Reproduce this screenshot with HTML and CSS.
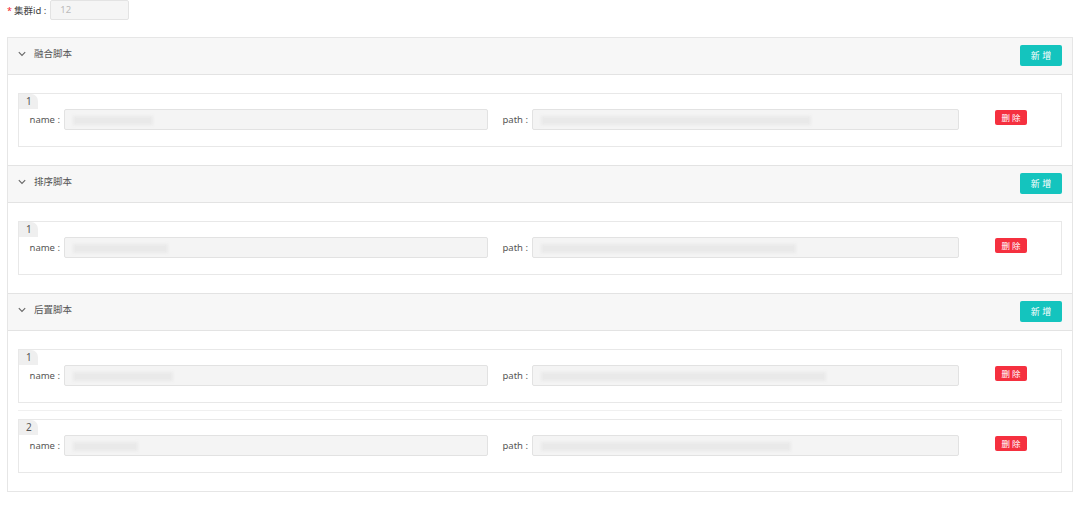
FILE: index.html
```html
<!DOCTYPE html>
<html lang="zh">
<head>
<meta charset="utf-8">
<link rel="stylesheet" href="styles.css">
</head>
<body>
<div class="top-row">
  <span class="req">*</span><span class="top-label">集群id :</span>
  <div class="id-input">12</div>
</div>
<div class="panel">
  <div class="section">
    <div class="sec-head">
      <svg class="chev" width="8" height="6" viewBox="0 0 8 6"><path d="M0.8 1.2 L4 4.4 L7.2 1.2" fill="none" stroke="#666" stroke-width="1.1"/></svg>
      <span class="sec-title">融合脚本</span>
      <button class="btn-add">新 增</button>
    </div>
    <div class="sec-body">
      <div class="card">
        <div class="tag">1</div>
        <div class="row">
          <span class="lbl lbl-name">name :</span>
          <div class="inp inp-name"><span class="blur" style="width:80px"></span></div>
          <span class="lbl lbl-path">path :</span>
          <div class="inp inp-path"><span class="blur" style="width:270px"></span></div>
          <button class="btn-del">删 除</button>
        </div>
      </div>
    </div>
  </div>
  <div class="section">
    <div class="sec-head">
      <svg class="chev" width="8" height="6" viewBox="0 0 8 6"><path d="M0.8 1.2 L4 4.4 L7.2 1.2" fill="none" stroke="#666" stroke-width="1.1"/></svg>
      <span class="sec-title">排序脚本</span>
      <button class="btn-add">新 增</button>
    </div>
    <div class="sec-body">
      <div class="card">
        <div class="tag">1</div>
        <div class="row">
          <span class="lbl lbl-name">name :</span>
          <div class="inp inp-name"><span class="blur" style="width:95px"></span></div>
          <span class="lbl lbl-path">path :</span>
          <div class="inp inp-path"><span class="blur" style="width:255px"></span></div>
          <button class="btn-del">删 除</button>
        </div>
      </div>
    </div>
  </div>
  <div class="section">
    <div class="sec-head">
      <svg class="chev" width="8" height="6" viewBox="0 0 8 6"><path d="M0.8 1.2 L4 4.4 L7.2 1.2" fill="none" stroke="#666" stroke-width="1.1"/></svg>
      <span class="sec-title">后置脚本</span>
      <button class="btn-add">新 增</button>
    </div>
    <div class="sec-body">
      <div class="card">
        <div class="tag">1</div>
        <div class="row">
          <span class="lbl lbl-name">name :</span>
          <div class="inp inp-name"><span class="blur" style="width:100px"></span></div>
          <span class="lbl lbl-path">path :</span>
          <div class="inp inp-path"><span class="blur" style="width:285px"></span></div>
          <button class="btn-del">删 除</button>
        </div>
      </div>
      <div class="sep"></div>
      <div class="card">
        <div class="tag">2</div>
        <div class="row">
          <span class="lbl lbl-name">name :</span>
          <div class="inp inp-name"><span class="blur" style="width:65px"></span></div>
          <span class="lbl lbl-path">path :</span>
          <div class="inp inp-path"><span class="blur" style="width:250px"></span></div>
          <button class="btn-del">删 除</button>
        </div>
      </div>
    </div>
  </div>
</div>
</body>
</html>
```

FILE: styles.css
```css
* { box-sizing: border-box; }
body {
  margin: 0;
  background: #fff;
  font-family: "Noto Sans", "Noto Sans CJK SC", sans-serif;
  font-size: 9.5px;
  color: #555;
}
.top-row {
  height: 20px;
  display: flex;
  align-items: center;
  padding-left: 7px;
}
.req { color: #f5222d; margin-right: 2px; font-size: 9px; }
.top-label { color: #444; }
.id-input {
  margin-left: 4px;
  width: 79px;
  height: 20px;
  border: 1px solid #e3e3e3;
  background: #f5f5f5;
  border-radius: 2px;
  color: #bbb;
  padding-left: 9px;
  line-height: 18px;
}
.panel {
  margin: 17px 0 0 7px;
  width: 1066px;
  border: 1px solid #e6e6e6;
}
.sec-head {
  height: 37px;
  background: #f7f7f7;
  border-bottom: 1px solid #e3e3e3;
  display: flex;
  align-items: flex-start;
  padding: 7px 10px 0 10px;
}
.section + .section .sec-head { border-top: 1px solid #e3e3e3; height: 38px; }
.chev { margin: 6px 8px 0 0; }
.sec-title { color: #555; line-height: 14px; margin-top: 2px; }
.btn-add {
  margin-left: auto;
  width: 42px;
  height: 21px;
  border: 0;
  border-radius: 2px;
  background: #14c4be;
  color: #fff;
  font-family: inherit;
  font-size: 9px;
  padding: 0;
}
.sec-body { padding: 18px 10px 18px 10px; }
.card {
  border: 1px solid #e8e8e8;
  height: 54px;
}
.tag {
  width: 19px;
  height: 15px;
  background: #efefef;
  border-top-right-radius: 7px;
  color: #555;
  font-size: 10px;
  line-height: 15px;
  padding-left: 7px;
}
.row {
  display: flex;
  align-items: center;
  margin-top: 0;
}
.lbl { color: #555; }
.lbl-name { width: 45px; text-align: right; padding-right: 4px; }
.lbl-path { width: 44px; text-align: right; padding-right: 4px; }
.inp {
  height: 21px;
  border: 1px solid #e2e2e2;
  background: #f4f4f4;
  border-radius: 2px;
  display: flex;
  align-items: center;
  padding-left: 8px;
}
.inp-name { width: 424px; }
.inp-path { width: 427px; }
.blur {
  display: block;
  height: 9px;
  background: #e9e9e9;
  filter: blur(1.5px);
  margin-top: 2px;
}
.btn-del {
  margin-left: 36px;
  width: 32px;
  height: 15px;
  border: 0;
  border-radius: 2px;
  background: #f5303f;
  color: #fff;
  font-family: inherit;
  font-size: 8.5px;
  padding: 0;
  margin-top: -5px;
}
.sep {
  height: 1px;
  background: #f0f0f0;
  margin: 7px 0 8px 0;
}
```
